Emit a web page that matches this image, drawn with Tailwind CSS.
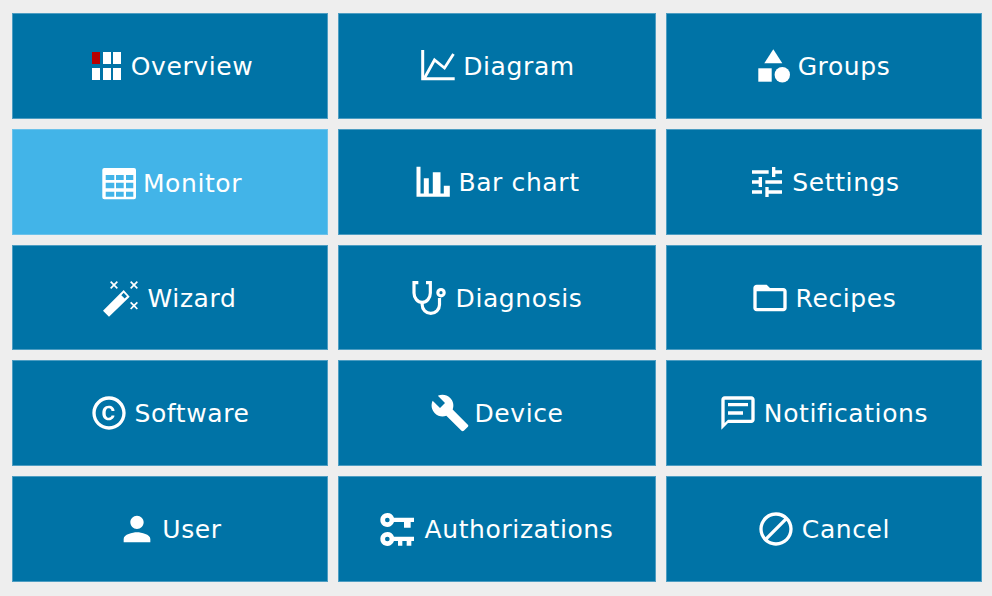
<!DOCTYPE html>
<html lang="en">
<head>
  <meta charset="UTF-8" />
  <title>Menu</title>
  <meta name="viewport" content="width=device-width, initial-scale=1" />
  <script src="https://cdn.jsdelivr.net/npm/@tailwindcss/browser@4"></script>
</head>
<body class="w-[992px] h-[596px] overflow-hidden bg-[#eeeeee] font-['DejaVu_Sans',sans-serif] text-[25px] tracking-[0.6px] text-white">
  <main class="grid grid-cols-[316px_318px_316px] grid-rows-[106px_106px_105px_106px_106px] gap-[10px] pl-[12px] pt-[13px]">

    <!-- row 1 -->
    <button class="flex items-center justify-center gap-1 border border-[#4d9dc2] bg-[#0073a6]">
      <svg class="h-10 w-10 shrink-0 -translate-x-[1px]" viewBox="-2 -2 40 40" fill="#fff">
        <rect x="4" y="4" width="8" height="12" fill="#b90000"/><rect x="15" y="4" width="8" height="12"/><rect x="25" y="4" width="8" height="12"/>
        <rect x="4" y="20" width="8" height="12"/><rect x="15" y="20" width="8" height="12"/><rect x="25" y="20" width="8" height="12"/>
      </svg>
      <span class="mt-[2px]">Overview</span>
    </button>
    <button class="flex items-center justify-center gap-1 border border-[#4d9dc2] bg-[#0073a6]">
      <svg class="h-10 w-10 shrink-0 -translate-x-[1px]" viewBox="-2 -2 40 40" fill="none" stroke="#fff" stroke-width="3">
        <path d="M2.7 2v28.8h32"/><path d="M4.5 30l10-18 10 8 9-14" stroke-width="2.8"/>
      </svg>
      <span class="mt-[2px]">Diagram</span>
    </button>
    <button class="flex items-center justify-center gap-1 border border-[#4d9dc2] bg-[#0073a6] pr-[4px]">
      <svg class="h-10 w-10 shrink-0 -translate-x-[2px]" viewBox="-2 -2 40 40" fill="#fff">
        <path d="M19.3 1.3L10.3 15.3H28.3z"/><rect x="4.3" y="20.3" width="13.4" height="13.4"/><circle cx="28.3" cy="26.7" r="7.7"/>
      </svg>
      <span class="mt-[2px]">Groups</span>
    </button>

    <!-- row 2 -->
    <button class="flex items-center justify-center gap-1 border border-[#6cc2ea] bg-[#42b4e8]">
      <svg class="h-10 w-10 shrink-0 -translate-x-[1px]" viewBox="-2 -2 40 40" fill="#fff" fill-rule="evenodd">
        <path d="M5.3 4H35a2 2 0 0 1 2 2v27.3a2 2 0 0 1-2 2H5.3a2 2 0 0 1-2-2V6a2 2 0 0 1 2-2zM6.7 11v5h8.6v-5zM17 11v5h7.7v-5zM27 11v5h7.3v-5zM6.7 18.7v5.6h8.6v-5.6zM17 18.7v5.6h7.7v-5.6zM27 18.7v5.6h7.3v-5.6zM6.7 27.7v5h8.6v-5zM17 27.7v5h7.7v-5zM27 27.7v5h7.3v-5z"/>
      </svg>
      <span class="ml-[1px] mt-[4px]">Monitor</span>
    </button>
    <button class="flex items-center justify-center gap-1 border border-[#4d9dc2] bg-[#0073a6]">
      <svg class="h-10 w-10 shrink-0 -translate-x-[2px]" viewBox="-2 -2 40 40" fill="#fff">
        <path d="M2.5 2.7h4v26.8h3.3V14.3h5v15.2h4V8.3h7.7v21.2h3.3V21.7h6v11H2.5z"/>
      </svg>
      <span class="mt-[2px]">Bar chart</span>
    </button>
    <button class="flex items-center justify-center gap-1 border border-[#4d9dc2] bg-[#0073a6]">
      <svg class="h-10 w-10 shrink-0 -translate-x-[1px]" viewBox="0 0 24 24" fill="#fff">
        <path d="M3 17v2h6v-2H3zM3 5v2h10V5H3zm10 16v-2h8v-2h-8v-2h-2v6h2zM7 9v2H3v2h4v2h2V9H7zm14 4v-2H11v2h10zm-6-4h2V7h4V5h-4V3h-2v6z"/>
      </svg>
      <span class="mt-[2px]">Settings</span>
    </button>

    <!-- row 3 -->
    <button class="flex items-center justify-center gap-1 border border-[#4d9dc2] bg-[#0073a6]">
      <svg class="h-10 w-10 shrink-0 -translate-x-[2px]" viewBox="0 0 24 24" fill="#fff">
        <path fill-rule="evenodd" d="M.6 19.6L13 7.2l3.6 4L4.2 23.2zM13 8.9l-1.4 1.4 2 2 1.4-1.4z"/>
        <path d="M5.2 2.2l2 2 2-2-2 2 2 2-2-2-2 2 2-2zM17.2 2.2l2 2 2-2-2 2 2 2-2-2-2 2 2-2zM17.2 14.6l2 2 2-2-2 2 2 2-2-2-2 2 2-2z" stroke="#fff" stroke-width="1"/>
      </svg>
      <span class="mt-[2px]">Wizard</span>
    </button>
    <button class="flex items-center justify-center gap-1 border border-[#4d9dc2] bg-[#0073a6]">
      <svg class="h-10 w-10 shrink-0 -translate-x-[2px]" viewBox="0 0 24 24" fill="none" stroke="#fff" stroke-width="1.9">
        <path d="M5 2.8H2.4V9a4.9 5.6 0 0 0 9.8 0V2.8H9.6"/>
        <path d="M7.3 14.6V16a5.2 5.2 0 0 0 10.4 0v-4"/>
        <circle cx="18.6" cy="8.8" r="1.9"/>
      </svg>
      <span class="mt-[2px]">Diagnosis</span>
    </button>
    <button class="flex items-center justify-center gap-1 border border-[#4d9dc2] bg-[#0073a6]">
      <svg class="h-10 w-10 shrink-0 -translate-x-[2px]" viewBox="0 0 24 24" fill="#fff">
        <path d="M20 6h-8l-2-2H4c-1.1 0-1.99.9-1.99 2L2 18c0 1.1.9 2 2 2h16c1.1 0 2-.9 2-2V8c0-1.1-.9-2-2-2zm0 12H4V8h16v10z"/>
      </svg>
      <span class="mt-[2px]">Recipes</span>
    </button>

    <!-- row 4 -->
    <button class="flex items-center justify-center gap-1 border border-[#4d9dc2] bg-[#0073a6]">
      <svg class="h-10 w-10 shrink-0 -translate-x-[1px]" viewBox="0 0 24 24" fill="#fff">
        <path d="M10.08 10.86c.05-.33.16-.62.3-.87s.34-.46.59-.62c.24-.15.54-.22.91-.23.23.01.44.05.63.13.2.09.38.21.52.36s.25.33.34.53.13.42.14.64h1.79c-.02-.47-.11-.9-.28-1.29s-.4-.73-.7-1.01-.66-.5-1.08-.66-.88-.23-1.39-.23c-.65 0-1.22.11-1.7.34s-.88.53-1.2.92-.56.84-.71 1.36S8 11.29 8 11.87v.27c0 .58.08 1.12.23 1.64s.39.97.71 1.35.72.69 1.2.91c.48.22 1.05.34 1.7.34.47 0 .91-.08 1.32-.23s.77-.36 1.08-.63.56-.58.74-.94.29-.74.3-1.15h-1.79c-.01.21-.06.4-.15.58s-.21.33-.36.46-.32.23-.52.3c-.19.07-.39.09-.6.1-.36-.01-.66-.08-.89-.23-.25-.16-.45-.37-.59-.62s-.25-.55-.3-.88-.08-.67-.08-1v-.27c0-.35.03-.68.08-1.01zM12 2C6.48 2 2 6.48 2 12s4.48 10 10 10 10-4.48 10-10S17.52 2 12 2zm0 18c-4.41 0-8-3.59-8-8s3.59-8 8-8 8 3.59 8 8-3.59 8-8 8z"/>
      </svg>
      <span class="mt-[2px]">Software</span>
    </button>
    <button class="flex items-center justify-center gap-1 border border-[#4d9dc2] bg-[#0073a6]">
      <svg class="h-10 w-10 shrink-0" viewBox="0 0 24 24" fill="#fff">
        <path d="M22.7 19l-9.1-9.1c.9-2.3.4-5-1.5-6.9-2-2-5-2.4-7.4-1.3L9 6 6 9 1.6 4.7C.4 7.1.9 10.1 2.9 12.1c1.9 1.9 4.6 2.4 6.9 1.5l9.1 9.1c.4.4 1 .4 1.4 0l2.3-2.3c.5-.4.5-1.1.1-1.4z"/>
      </svg>
      <span class="mt-[2px]">Device</span>
    </button>
    <button class="flex items-center justify-center gap-1 border border-[#4d9dc2] bg-[#0073a6]">
      <svg class="h-10 w-10 shrink-0 -translate-x-[2px]" viewBox="0 0 24 24" fill="#fff">
        <path d="M20 2H4c-1.1 0-2 .9-2 2v18l4-4h14c1.1 0 2-.9 2-2V4c0-1.1-.9-2-2-2zm0 14H6l-2 2V4h16v12z"/>
        <path d="M6 6h12v2H6zm0 5h9v2H6z"/>
      </svg>
      <span class="mt-[2px]">Notifications</span>
    </button>

    <!-- row 5 -->
    <button class="flex items-center justify-center gap-1 border border-[#4d9dc2] bg-[#0073a6]">
      <svg class="h-10 w-10 shrink-0 -translate-x-[1px]" viewBox="0 0 24 24" fill="#fff">
        <path d="M12 12c2.21 0 4-1.79 4-4s-1.79-4-4-4-4 1.79-4 4 1.79 4 4 4zm0 2c-2.67 0-8 1.34-8 4v2h16v-2c0-2.66-5.33-4-8-4z"/>
      </svg>
      <span class="mt-[2px]">User</span>
    </button>
    <button class="flex items-center justify-center gap-1 border border-[#4d9dc2] bg-[#0073a6]">
      <svg class="h-10 w-10 shrink-0 -translate-x-[3px]" viewBox="0 0 24 24" fill="#fff">
        <path fill-rule="evenodd" d="M5.6 2.4a4.2 4.2 0 0 1 4 2.8h12v2.6h-2v3.4h-4V7.8H9.6a4.2 4.2 0 1 1-4-5.4zm0 2.8a1.4 1.4 0 1 0 0 2.8 1.4 1.4 0 0 0 0-2.8z"/>
        <path fill-rule="evenodd" d="M5.6 13.8a4.2 4.2 0 0 1 4 2.8h12v2.6h-1.6V22h-2.8v-2.8h-2.6V22h-2.6v-2.8H9.6a4.2 4.2 0 1 1-4-5.4zm0 2.8a1.4 1.4 0 1 0 0 2.8 1.4 1.4 0 0 0 0-2.8z"/>
      </svg>
      <span class="mt-[2px]">Authorizations</span>
    </button>
    <button class="flex items-center justify-center gap-1 border border-[#4d9dc2] bg-[#0073a6]">
      <svg class="h-10 w-10 shrink-0 -translate-x-[2px]" viewBox="0 0 24 24" fill="#fff">
        <path d="M12 2C6.48 2 2 6.48 2 12s4.48 10 10 10 10-4.48 10-10S17.52 2 12 2zM4 12c0-4.42 3.58-8 8-8 1.85 0 3.55.63 4.9 1.69L5.69 16.9C4.63 15.55 4 13.85 4 12zm8 8c-1.85 0-3.55-.63-4.9-1.69L18.31 7.1C19.37 8.45 20 10.15 20 12c0 4.42-3.58 8-8 8z"/>
      </svg>
      <span class="mt-[2px]">Cancel</span>
    </button>

  </main>
</body>
</html>
